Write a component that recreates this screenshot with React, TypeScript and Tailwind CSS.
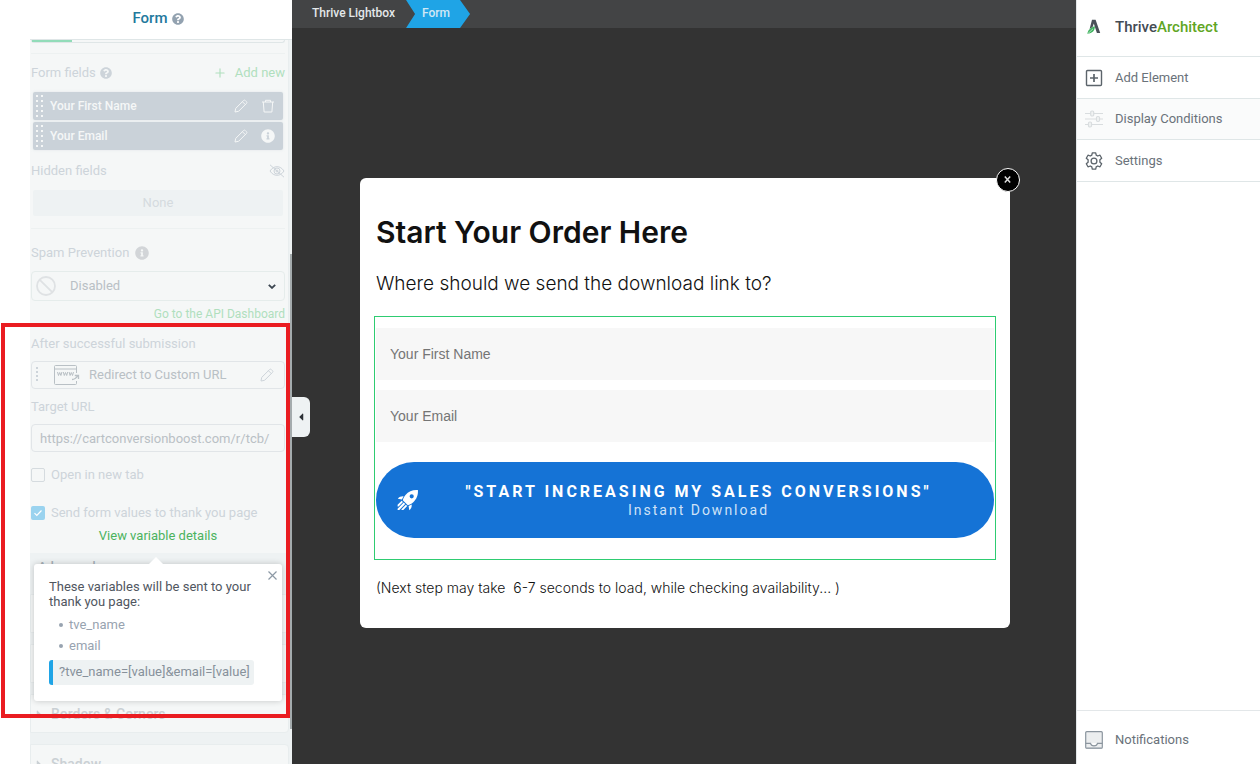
import type { ReactNode } from 'react';
import { Plus } from 'lucide-react';
import { FaQuestionCircle, FaInfoCircle, FaCaretLeft, FaCaretRight } from 'react-icons/fa';

const fields = [
  { name: 'Your First Name', removable: true },
  { name: 'Your Email', removable: false },
];

const sections = ['Borders & Corners', 'Shadow'];

function PencilIcon({ className = '' }: { className?: string }) {
  return (
    <svg className={`h-3.5 w-3.5 ${className}`} viewBox="0 0 14 14" fill="none" stroke="currentColor" strokeLinejoin="round">
      <path d="M1 13l.7-3.6 7.8-7.8a1.3 1.3 0 0 1 1.9 0l1 1a1.3 1.3 0 0 1 0 1.9l-7.8 7.8L1 13z" />
      <path d="M8.4 2.7l2.9 2.9" />
    </svg>
  );
}

function TrashIcon() {
  return (
    <svg className="h-3.5 w-3.5" viewBox="0 0 14 14" fill="none" stroke="currentColor">
      <path d="M1 3h12M4.5 3V1.3h5V3M2.3 3l.8 10h7.8l.8-10" />
    </svg>
  );
}

function HiddenIcon() {
  return (
    <svg className="h-3.5 w-4" viewBox="0 0 16 14" fill="none" stroke="currentColor">
      <path d="M1 7c2-3 4.300-4.300 7-4.300S13 4 15 7c-2 3-4.300 4.300-7 4.300S3 10 1 7z" />
      <circle cx="8" cy="7" r="3" />
      <circle cx="8" cy="7" r="1" />
      <path d="M1 .8l14 12.400" />
    </svg>
  );
}

function BannedIcon() {
  return (
    <svg className="h-5 w-5" viewBox="0 0 20 20" fill="none" stroke="#dfe2e4" strokeWidth="1.800">
      <circle cx="10" cy="10" r="9" />
      <path d="M3.800 3.800l12.400 12.400" />
    </svg>
  );
}

function RedirectIcon() {
  return (
    <svg className="h-5 w-[26px]" viewBox="0 0 26 20" fill="none" stroke="#b9c0c5">
      <path d="M22.500 8V1.500a1 1 0 0 0-1-1h-20a1 1 0 0 0-1 1v17a1 1 0 0 0 1 1h20a1 1 0 0 0 1-1V16M.5 4h22" />
      <path d="M3.500 7l1 3.500 1.200-3 1.200 3 1-3.500M9.300 7l1 3.500 1.200-3 1.200 3 1-3.500M15.100 7l1 3.500 1.200-3 1.200 3 1-3.500" />
      <path d="M18 14.500c2.400 0 4.200-1.300 6-4M20.800 10.500h3.700v3.400" strokeWidth="1.300" />
    </svg>
  );
}

function DragDots({ columns }: { columns: 1 | 2 }) {
  return (
    <svg className={columns === 2 ? 'h-[22px] w-2' : 'h-4 w-0.5'} viewBox={columns === 2 ? '0 0 8 22' : '0 0 2 16'} fill="currentColor">
      {Array.from({ length: columns === 2 ? 5 : 4 }, (_, i) => (
        <g key={i}>
          <rect x="0" y={columns === 2 ? i * 5 : i * 4} width="2" height="2" />
          {columns === 2 && <rect x="5" y={i * 5} width="2" height="2" />}
        </g>
      ))}
    </svg>
  );
}

function RocketIcon() {
  return (
    <svg className="h-[22px] w-[22px]" viewBox="0 0 22 22" fill="#fff">
      <path fillRule="evenodd" d="M20.900 1.100c.5 4.800-1.300 9.300-4.900 12.400-1.700 1.400-3.400 2.200-5.200 2.700L5.800 11.200c.5-1.800 1.300-3.500 2.700-5.200C11.600 2.400 16.100.6 20.900 1.100zM14.700 5.200a2.100 2.100 0 1 0 0 4.200 2.100 2.100 0 0 0 0-4.200z" />
      <path d="M6.600 7.300L4.900 10.400.8 9.700c1.600-1.800 3.300-2.600 5.800-2.400zM14.700 15.400l-3.100 1.700.7 4.100c1.800-1.600 2.600-3.300 2.400-5.800z" />
      <path d="M4.700 11.700l1.300 1.300-4.500 4.500H.6v-1.700zM6.700 13.600l1.500 1.500L2.300 21H.6v-1.300zM8.900 15.800l1.300 1.300L6.300 21H4.500v-.8z" />
    </svg>
  );
}

function ArchitectLogo() {
  return (
    <svg className="h-4 w-4" viewBox="0 0 16 16">
      <path d="M6 .8h3.600L14.200 14h-3.300L7.800 4.600 6.600 8 3.600 10z" fill="#4a5058" />
      <path d="M8.900 7.300c-.1 4.200-2.300 7.200-7.600 7.500C2 11 4.300 8.800 8.900 7.300z" fill="#3fb25f" />
      <path d="M2 14.500l5-4.700" stroke="#b9e6c4" strokeWidth=".9" />
    </svg>
  );
}

function AddIcon() {
  return (
    <svg className="h-[18px] w-[18px]" viewBox="0 0 18 18" fill="none" stroke="#5c646b" strokeWidth="1.400">
      <rect x="1.500" y="1.500" width="15" height="15" rx="1" />
      <path d="M9 5v8M5 9h8" strokeWidth="1.700" />
    </svg>
  );
}

function ConditionsIcon() {
  return (
    <svg className="h-[18px] w-[18px]" viewBox="0 0 18 18" fill="#f1f3f3" stroke="#d9dddf" strokeWidth="1.200">
      <path d="M0 3.500h18M0 9h18M0 14.500h18" />
      <rect x="5.700" y="1" width="3" height="5" rx="1.200" />
      <rect x="11.500" y="6.500" width="3" height="5" rx="1.200" />
      <rect x="3.500" y="12" width="3" height="5" rx="1.200" />
    </svg>
  );
}

function GearIcon() {
  return (
    <svg className="h-[18px] w-[18px]" viewBox="0 0 18 18" fill="none" stroke="#5c646b" strokeWidth="1.300" strokeLinejoin="round">
      <path d="M7.300.8h3.400l.5 2.300 1.500.9 2.300-.8 1.700 3-1.800 1.600v2.400l1.800 1.600-1.700 3-2.300-.8-1.500.9-.5 2.300H7.300l-.5-2.300-1.500-.9-2.300.8-1.700-3 1.800-1.600V7.800L1.300 6.200l1.700-3 2.300.8 1.500-.9z" />
      <circle cx="9" cy="9" r="2.900" />
    </svg>
  );
}

function InboxIcon() {
  return (
    <svg className="h-[18px] w-[18px]" viewBox="0 0 18 18" fill="#eceeef" stroke="#8b959e" strokeWidth="1.200">
      <rect x=".7" y=".7" width="16.600" height="16.600" rx="1" />
      <path d="M.7 12.300h4.800c.4 1.700 1.700 2.500 3.500 2.500s3.100-.8 3.500-2.500h4.800" fill="#fff" />
      <path d="M1 17h16" stroke="#a9b1b8" />
    </svg>
  );
}

function Label({ children, className = '' }: { children: ReactNode; className?: string }) {
  return <div className={`flex h-5 items-center text-[#cdd4da] ${className}`}>{children}</div>;
}

function VariablesPopup() {
  return (
    <div className="absolute top-[38px] left-[3px] z-10 h-[137px] w-[248px] rounded-[3px] bg-white px-[15px] pt-[15px] shadow-[0_0_6px_rgba(0,0,0,0.2)]">
      <div className="absolute -top-[7px] left-[114px] h-0 w-0 border-x-8 border-b-8 border-x-transparent border-b-white" />
      <button aria-label="Close" className="absolute top-[7px] right-[5px] text-[#8d99a5]">
        <svg className="h-[9px] w-[9px]" viewBox="0 0 9 9" stroke="currentColor" strokeWidth="1.200">
          <path d="M.5.5l8 8M8.500.5l-8 8" />
        </svg>
      </button>
      <p className="leading-[15px] text-[#50565f]">
        These variables will be sent to your
        <br />
        thank you page:
      </p>
      <ul className="mt-[5px] pl-2.5 text-[#98a3b0]">
        {['tve_name', 'email'].map((v) => (
          <li key={v} className="flex h-[21px] items-center gap-1.5">
            <span className="h-1 w-1 rounded-full bg-[#98a3b0]" />
            {v}
          </li>
        ))}
      </ul>
      <code className="mt-1 flex h-[25px] w-[205px] items-center rounded-[3px] border-l-4 border-[#1fa4e6] bg-[#eef2f3] pb-px pl-1.5 font-[Roboto,sans-serif] text-[13px] whitespace-nowrap text-[#87919b]">
        ?tve_name=[value]&amp;email=[value]
      </code>
    </div>
  );
}

function Sidebar() {
  return (
    <aside className="relative flex h-full w-[292px] shrink-0 flex-col bg-white">
      <header className="flex h-[39px] shrink-0 items-center justify-center gap-1 pb-0.5 pl-6">
        <h1 className="text-[15px] font-medium text-[#23799d]">Form</h1>
        <FaQuestionCircle className="h-3 w-3 text-[#93a2b0]" />
      </header>

      <div className="ml-[30px] min-h-0 flex-1 overflow-hidden border-t border-[#dfe6e7] bg-[#eef2f3] pr-[3px]">
        <div className="border-r border-[#e9eeef] bg-[#f5f7f7] pr-[3px] pb-[7px] pl-px">
          <div className="h-[3px] rounded-b border-x border-b border-[#dfe6e7]">
            <div className="h-0.5 w-10 bg-[#92dcb9]" />
          </div>
          <hr className="mt-2.5 border-[#edf1f1]" />

          <div className="mt-[9px] flex items-center justify-between">
            <Label className="gap-1">
              Form fields
              <FaQuestionCircle className="h-3 w-3" />
            </Label>
            <button className="flex h-5 items-center gap-2 text-[#b0dfbe]">
              <Plus className="h-3.5 w-3.5" />
              Add new
            </button>
          </div>
          <div className="mx-0.5 mt-[9px] flex flex-col gap-0.5">
            {fields.map((field) => (
              <div key={field.name} className="flex h-7 items-center rounded-[2px] bg-[#cad2d9] pr-2 pl-[3px] text-[#f5f7f7] shadow-[0_0_3px_rgba(180,195,205,0.3)]">
                <DragDots columns={2} />
                <span className="ml-1.5 flex-1 text-xs font-medium">{field.name}</span>
                <button aria-label={`Edit ${field.name}`}>
                  <PencilIcon />
                </button>
                {field.removable ? (
                  <button aria-label={`Delete ${field.name}`} className="ml-[13px]">
                    <TrashIcon />
                  </button>
                ) : (
                  <FaInfoCircle className="ml-[13px] h-3.5 w-3.5" />
                )}
              </div>
            ))}
          </div>

          <Label className="mt-[11px] justify-between">
            Hidden fields
            <HiddenIcon />
          </Label>
          <div className="mx-0.5 mt-[9px] flex h-[26px] items-center justify-center rounded-[2px] bg-[#eef2f3] text-[#d5dbdf]">None</div>
          <hr className="mt-3 border-[#edf1f1]" />

          <Label className="mt-3.5 gap-1.5">
            <label htmlFor="spam">Spam Prevention</label>
            <FaInfoCircle className="h-3.5 w-3.5 text-[#d2d5d8]" />
          </Label>
          <div className="relative mt-2">
            <select id="spam" className="h-[30px] w-full appearance-none rounded border border-[#e5eceb] pl-[38px] text-[#b9c0c5]">
              <option>Disabled</option>
            </select>
            <div className="pointer-events-none absolute inset-y-0 left-[5px] flex items-center">
              <BannedIcon />
            </div>
            <div className="pointer-events-none absolute inset-y-0 right-[9px] flex items-center">
              <svg className="h-[5px] w-2" viewBox="0 0 8 5" fill="none" stroke="#3b4550" strokeWidth="1.800">
                <path d="M.8.8L4 3.900 7.200.8" />
              </svg>
            </div>
          </div>
          <div className="mt-[3px] flex h-5 items-center justify-end text-xs">
            <a href="#api" className="text-[#b0dfbe]">
              Go to the API Dashboard
            </a>
          </div>

          <Label className="mt-2.5">After successful submission</Label>
          <div className="mt-[7px] flex h-7 items-center rounded border border-[#e1e5e8] pr-2.5 pl-1 text-[#cdd4da]">
            <DragDots columns={1} />
            <span className="ml-4">
              <RedirectIcon />
            </span>
            <span className="ml-[9px] flex-1 text-[#b9c0c5]">Redirect to Custom URL</span>
            <button aria-label="Edit redirect">
              <PencilIcon />
            </button>
          </div>

          <Label className="mt-2">
            <label htmlFor="target">Target URL</label>
          </Label>
          <input
            id="target"
            type="text"
            defaultValue="https://cartconversionboost.com/r/tcb/"
            className="mt-[7px] block h-7 w-full rounded border border-[#e1e5e8] pr-0.5 pl-2 text-[#b9c0c5]"
          />

          <label className="mt-[13px] flex h-5 items-center gap-1.5 text-[#cdd4da]">
            <input type="checkbox" className="h-3.5 w-3.5 appearance-none rounded-[2px] border border-[#d5dbdf]" />
            Open in new tab
          </label>
          <label className="relative mt-[18px] flex h-5 items-center gap-1.5 text-[#cdd4da]">
            <input type="checkbox" defaultChecked className="h-3.5 w-3.5 appearance-none rounded-[2px] bg-[#9ad3ef]" />
            <svg className="pointer-events-none absolute left-[3px] h-2 w-2" viewBox="0 0 8 8" fill="none" stroke="#fff" strokeWidth="1.200">
              <path d="M.5 4.200l2.300 2.300L7.500 1.500" />
            </svg>
            Send form values to thank you page
          </label>
          <div className="relative mt-[3px] flex h-5 items-center justify-center">
            <button className="text-[#4bb35e]">View variable details</button>
            <VariablesPopup />
          </div>
        </div>

        <h2 className="h-[30px] pt-1 pl-2 font-medium text-[#a9b2b9]">Advanced</h2>
        <div className="mt-[11px] flex flex-col gap-[11px]">
          <div className="h-[39px] rounded-r border border-[#e8edee] bg-[#f5f7f7]" />
          <div className="h-[39px] rounded-r border border-[#e8edee] bg-[#f5f7f7]" />
          {sections.map((name) => (
            <div key={name} className="flex h-[39px] shrink-0 items-center gap-2 rounded-r border border-[#e8edee] bg-[#f5f7f7] pl-1 text-sm font-medium text-[#cad0d4]">
              <FaCaretRight className="h-3 w-2" />
              {name}
            </div>
          ))}
        </div>
      </div>

      <div className="absolute top-[254px] right-0 h-[475px] w-0.5 bg-[#a4abad]" />
      <div className="pointer-events-none absolute top-[323px] right-0.5 left-px z-20 h-[395px] border-4 border-[#ea1c21]" />
      <button aria-label="Collapse sidebar" className="absolute top-[397px] left-full z-20 flex h-10 w-[18px] items-center justify-center rounded-r-md bg-[#eef2f3] text-[#2c3136]">
        <FaCaretLeft className="h-3 w-2" />
      </button>
    </aside>
  );
}

function Breadcrumbs() {
  return (
    <nav className="flex h-7 shrink-0 bg-[#434445] text-xs font-medium">
      <a href="#lightbox" className="flex items-center pr-[11px] pb-0.5 pl-5 text-[#e4e8ea]">
        Thrive Lightbox
      </a>
      <a href="#form" className="flex w-16 items-center bg-[#1fa4e6] pb-0.5 pl-4 text-[#cfe8f5] [clip-path:polygon(0_0,54px_0,100%_50%,54px_100%,0_100%,9px_50%)]">
        Form
      </a>
    </nav>
  );
}

function Lightbox() {
  return (
    <section className="relative mt-[150px] ml-0.5 w-full max-w-[650px] rounded-md bg-white px-3.5 pb-7 font-[Inter,sans-serif] text-[#111]">
      <button aria-label="Close" className="absolute -top-2.5 -right-2.5 flex h-6 w-6 items-center justify-center rounded-full border border-white bg-black pr-px pb-px">
        <svg className="h-[7px] w-[7px]" viewBox="0 0 7 7" stroke="#ddd" strokeWidth="1.500">
          <path d="M.8.5l5.400 6M6.200.5l-5.400 6" />
        </svg>
      </button>
      <h2 className="px-0.5 pt-9 text-3xl leading-9 font-semibold">Start Your Order Here</h2>
      <p className="mt-5 px-0.5 text-[19px] leading-7 font-light">Where should we send the download link to?</p>
      <form className="mt-[18px] border border-[#2ecc71] px-px pt-[11px] pb-[21px]" onSubmit={(e) => e.preventDefault()}>
        <input
          type="text"
          aria-label="Your First Name"
          placeholder="Your First Name"
          className="block h-[52px] w-full bg-[#f7f7f7] px-3.5 font-['Liberation_Sans',sans-serif] text-sm placeholder:text-[#757575]"
        />
        <input
          type="email"
          aria-label="Your Email"
          placeholder="Your Email"
          className="mt-2.5 block h-[52px] w-full bg-[#f7f7f7] px-3.5 font-['Liberation_Sans',sans-serif] text-sm placeholder:text-[#757575]"
        />
        <button className="mt-5 flex h-[76px] w-full items-center rounded-full bg-[#1573d6] px-[21px] font-[Roboto,sans-serif] text-white">
          <RocketIcon />
          <span className="flex flex-1 flex-col pt-0.5 pl-[5px]">
            <span className="text-base leading-[18px] font-bold tracking-[3px]">"START INCREASING MY SALES CONVERSIONS"</span>
            <span className="text-sm leading-[18px] tracking-[2px] text-[#cfe2f7]">Instant Download</span>
          </span>
        </button>
      </form>
      <p className="mt-4 px-0.5 text-sm leading-6 font-light whitespace-pre-wrap">
        {'(Next step may take  6-7 seconds to load, while checking availability... )'}
      </p>
    </section>
  );
}

function RightPanel() {
  const items = [
    { label: 'Add Element', icon: <AddIcon />, className: 'h-[42px] bg-white' },
    { label: 'Display Conditions', icon: <ConditionsIcon />, className: 'h-[41px] bg-[#fafbfb]' },
    { label: 'Settings', icon: <GearIcon />, className: 'h-[42px] bg-white' },
  ];

  return (
    <aside className="flex h-full w-[184px] shrink-0 flex-col border-l border-[#e3e7e9] bg-white">
      <div className="flex h-[57px] items-center gap-[13px] border-b border-[#dfe6e7] pb-0.5 pl-[9px] text-[15px] font-medium text-[#434b54]">
        <ArchitectLogo />
        <span>
          Thrive<span className="text-[#5fa624]">Architect</span>
        </span>
      </div>
      {items.map((item) => (
        <button key={item.label} className={`flex items-center gap-3 border-b border-[#dfe6e7] pl-2 text-[#6a727a] ${item.className}`}>
          {item.icon}
          {item.label}
        </button>
      ))}
      <button className="mt-auto flex h-[54px] items-center gap-3 border-t border-[#e3e7e9] pt-1 pl-2 text-[#6a727a]">
        <InboxIcon />
        Notifications
      </button>
    </aside>
  );
}

export default function App() {
  return (
    <div className="flex h-screen overflow-hidden bg-[#333] font-[Roboto,sans-serif] text-[13px]">
      <Sidebar />
      <main className="flex min-w-0 flex-1 flex-col">
        <Breadcrumbs />
        <div className="flex flex-1 items-start justify-center overflow-hidden">
          <Lightbox />
        </div>
      </main>
      <RightPanel />
    </div>
  );
}
